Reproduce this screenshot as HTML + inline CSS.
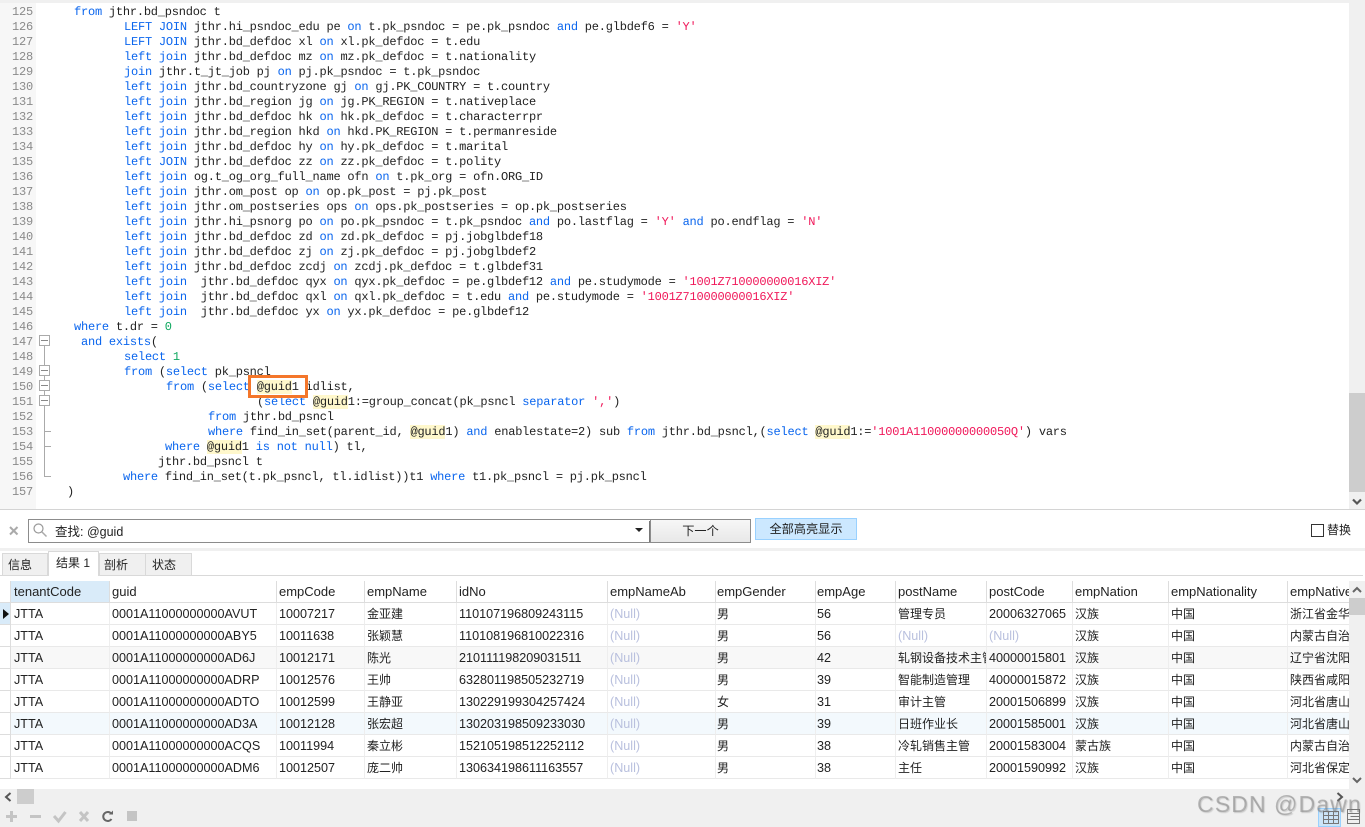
<!DOCTYPE html>
<html><head><meta charset="utf-8"><style>
html,body{margin:0;padding:0;background:#fff;}
#p{position:relative;width:1365px;height:827px;overflow:hidden;background:#fff;font-family:"Liberation Sans","Noto Sans CJK SC",sans-serif;}
.a{position:absolute;}
#code{position:absolute;left:0;top:1px;}
#nums{position:absolute;left:0;top:1px;width:36px;}
#code div{position:absolute;white-space:pre;font:12px/15px "Liberation Mono","Noto Sans CJK SC",monospace;letter-spacing:-.22px;color:#222;height:15px;text-rendering:geometricPrecision;}
#nums div{position:absolute;left:0;width:33px;text-align:right;font:12px/15px "Liberation Mono",monospace;letter-spacing:-.22px;color:#8a8a8a;height:15px;}
i{font-style:normal;color:#0b66ee;}
b{font-weight:normal;color:#f0185a;}
u{text-decoration:none;color:#10a860;}
em{font-style:normal;background:#fff8cc;}
table{border-collapse:separate;border-spacing:0;table-layout:fixed;font-size:12.6px;color:#222;}
td{height:19px;padding:2px 0 0 2px;border-right:1px solid #eee;border-bottom:1px solid #e9e9e9;overflow:hidden;white-space:nowrap;box-sizing:content-box;line-height:19px;}
td:first-child{padding:0;height:21px;border-right:1px solid #ddd;border-bottom:1px solid #ddd;background:#fff;}
td:nth-child(2){padding-left:3px;}
td:nth-child(8),td:nth-child(9){padding-left:1px;}
td.c{font-size:12px;}
tr.h td{height:21px;padding-top:0;line-height:21px;border-bottom:1px solid #ddd;border-right:1px solid #ddd;font-size:13px;}
tr.g td{background:#f8f8f8;}tr.s td{background:#f3f9fd;}
tr.g td:first-child,tr.s td:first-child{background:#fff;}
td.n{color:#b9c0de;}
.tab{position:absolute;top:553px;height:21px;background:#f0f0f0;border:1px solid #d9d9d9;border-bottom:0;box-sizing:content-box;font-size:12px;line-height:22px;color:#222;white-space:nowrap;}
</style></head><body><div id="p">
<div class="a" style="left:0;top:0;width:1365px;height:3px;background:#f0f0f0"></div>
<div class="a" style="left:0;top:3px;width:36px;height:506px;background:#f7f7f7"></div>
<div class="a" style="left:1349px;top:3px;width:16px;height:506px;background:#f0f0f0"></div>
<div class="a" style="left:1349px;top:393px;width:16px;height:99px;background:#cdcdcd"></div>
<svg class="a" style="left:1349px;top:496px" width="16" height="12"><path d="M4 3.500L8 7.500L12 3.500" fill="none" stroke="#555" stroke-width="2.200"/></svg>
<div class="a" style="left:0;top:509px;width:1365px;height:1px;background:#d4d4d4"></div>

<div id="nums">
<div style="top:4px">125</div><div style="top:19px">126</div><div style="top:34px">127</div><div style="top:49px">128</div><div style="top:64px">129</div><div style="top:79px">130</div><div style="top:94px">131</div><div style="top:109px">132</div><div style="top:124px">133</div><div style="top:139px">134</div><div style="top:154px">135</div><div style="top:169px">136</div><div style="top:184px">137</div><div style="top:199px">138</div><div style="top:214px">139</div><div style="top:229px">140</div><div style="top:244px">141</div><div style="top:259px">142</div><div style="top:274px">143</div><div style="top:289px">144</div><div style="top:304px">145</div><div style="top:319px">146</div><div style="top:334px">147</div><div style="top:349px">148</div><div style="top:364px">149</div><div style="top:379px">150</div><div style="top:394px">151</div><div style="top:409px">152</div><div style="top:424px">153</div><div style="top:439px">154</div><div style="top:454px">155</div><div style="top:469px">156</div><div style="top:484px">157</div>
</div>

<svg class="a" style="left:36px;top:330px" width="20" height="160">
<path d="M8.500 16V146.500H15M8.500 101.500H15M8.500 116.500H15" fill="none" stroke="#aaa"/>
<g fill="#fff" stroke="#aaa"><rect x="3.500" y="5.500" width="10" height="10"/><rect x="3.500" y="35.500" width="10" height="10"/><rect x="3.500" y="50.500" width="10" height="10"/><rect x="3.500" y="65.500" width="10" height="10"/></g>
<path d="M5 10.500H12M5 40.500H12M5 55.500H12M5 70.500H12" stroke="#888"/>
</svg>

<div id="code">
<div style="left:74px;top:4px"><i>from</i> jthr.bd_psndoc t</div>
<div style="left:124px;top:19px"><i>LEFT JOIN</i> jthr.hi_psndoc_edu pe <i>on</i> t.pk_psndoc = pe.pk_psndoc <i>and</i> pe.glbdef6 = <b>'Y'</b></div>
<div style="left:124px;top:34px"><i>LEFT JOIN</i> jthr.bd_defdoc xl <i>on</i> xl.pk_defdoc = t.edu</div>
<div style="left:124px;top:49px"><i>left join</i> jthr.bd_defdoc mz <i>on</i> mz.pk_defdoc = t.nationality</div>
<div style="left:124px;top:64px"><i>join</i> jthr.t_jt_job pj <i>on</i> pj.pk_psndoc = t.pk_psndoc</div>
<div style="left:124px;top:79px"><i>left join</i> jthr.bd_countryzone gj <i>on</i> gj.PK_COUNTRY = t.country</div>
<div style="left:124px;top:94px"><i>left join</i> jthr.bd_region jg <i>on</i> jg.PK_REGION = t.nativeplace</div>
<div style="left:124px;top:109px"><i>left join</i> jthr.bd_defdoc hk <i>on</i> hk.pk_defdoc = t.characterrpr</div>
<div style="left:124px;top:124px"><i>left join</i> jthr.bd_region hkd <i>on</i> hkd.PK_REGION = t.permanreside</div>
<div style="left:124px;top:139px"><i>left join</i> jthr.bd_defdoc hy <i>on</i> hy.pk_defdoc = t.marital</div>
<div style="left:124px;top:154px"><i>left JOIN</i> jthr.bd_defdoc zz <i>on</i> zz.pk_defdoc = t.polity</div>
<div style="left:124px;top:169px"><i>left join</i> og.t_og_org_full_name ofn <i>on</i> t.pk_org = ofn.ORG_ID</div>
<div style="left:124px;top:184px"><i>left join</i> jthr.om_post op <i>on</i> op.pk_post = pj.pk_post</div>
<div style="left:124px;top:199px"><i>left join</i> jthr.om_postseries ops <i>on</i> ops.pk_postseries = op.pk_postseries</div>
<div style="left:124px;top:214px"><i>left join</i> jthr.hi_psnorg po <i>on</i> po.pk_psndoc = t.pk_psndoc <i>and</i> po.lastflag = <b>'Y'</b> <i>and</i> po.endflag = <b>'N'</b></div>
<div style="left:124px;top:229px"><i>left join</i> jthr.bd_defdoc zd <i>on</i> zd.pk_defdoc = pj.jobglbdef18</div>
<div style="left:124px;top:244px"><i>left join</i> jthr.bd_defdoc zj <i>on</i> zj.pk_defdoc = pj.jobglbdef2</div>
<div style="left:124px;top:259px"><i>left join</i> jthr.bd_defdoc zcdj <i>on</i> zcdj.pk_defdoc = t.glbdef31</div>
<div style="left:124px;top:274px"><i>left join</i>  jthr.bd_defdoc qyx <i>on</i> qyx.pk_defdoc = pe.glbdef12 <i>and</i> pe.studymode = <b>'1001Z710000000016XIZ'</b></div>
<div style="left:124px;top:289px"><i>left join</i>  jthr.bd_defdoc qxl <i>on</i> qxl.pk_defdoc = t.edu <i>and</i> pe.studymode = <b>'1001Z710000000016XIZ'</b></div>
<div style="left:124px;top:304px"><i>left join</i>  jthr.bd_defdoc yx <i>on</i> yx.pk_defdoc = pe.glbdef12</div>
<div style="left:74px;top:319px"><i>where</i> t.dr = <u>0</u></div>
<div style="left:81px;top:334px"><i>and exists</i>(</div>
<div style="left:124px;top:349px"><i>select</i> <u>1</u></div>
<div style="left:124px;top:364px"><i>from</i> (<i>select</i> pk_psncl</div>
<div style="left:166px;top:379px"><i>from</i> (<i>select</i> <em>@guid</em>1 idlist,</div>
<div style="left:257px;top:394px">(<i>select</i> <em>@guid</em>1:=group_concat(pk_psncl <i>separator</i> <b>','</b>)</div>
<div style="left:208px;top:409px"><i>from</i> jthr.bd_psncl</div>
<div style="left:208px;top:424px"><i>where</i> find_in_set(parent_id, <em>@guid</em>1) <i>and</i> enablestate=2) sub <i>from</i> jthr.bd_psncl,(<i>select</i> <em>@guid</em>1:=<b>'1001A11000000000050Q'</b>) vars</div>
<div style="left:165px;top:439px"><i>where</i> <em>@guid</em>1 <i>is not null</i>) tl,</div>
<div style="left:158px;top:454px">jthr.bd_psncl t</div>
<div style="left:123px;top:469px"><i>where</i> find_in_set(t.pk_psncl, tl.idlist))t1 <i>where</i> t1.pk_psncl = pj.pk_psncl</div>
<div style="left:67px;top:484px">)</div>
</div>
<div class="a" style="left:248px;top:375px;width:60px;height:23px;box-sizing:border-box;border:3px solid #f4762a"></div>

<svg class="a" style="left:8px;top:525px" width="12" height="12"><path d="M2 2L9.500 9.500M9.500 2L2 9.500" stroke="#aaa" stroke-width="2"/></svg>
<div class="a" style="left:28px;top:519px;width:622px;height:24px;box-sizing:border-box;border:1px solid #8c8c8c;border-width:1px 0 1px 1px;background:#fff"></div>
<svg class="a" style="left:32px;top:522px" width="16" height="16"><circle cx="6.500" cy="6.500" r="4.500" fill="none" stroke="#999" stroke-width="1.200"/><path d="M10 10L14.500 14.500" stroke="#aaa" stroke-width="1.500"/></svg>
<div class="a" style="left:55px;top:524px;font-size:12.500px;line-height:17px;color:#222">查找: @guid</div>
<svg class="a" style="left:634px;top:527px" width="10" height="7"><path d="M1 1H9L5 5Z" fill="#222"/></svg>
<div class="a" style="left:649px;top:521px;width:1px;height:21px;background:#777"></div>
<div class="a" style="left:650px;top:519px;width:101px;height:24px;box-sizing:border-box;border:1px solid #8c8c8c;background:linear-gradient(#f7f7f7,#e8e8e8);font-size:12.200px;line-height:23px;text-align:center;color:#222">下一个</div>
<div class="a" style="left:755px;top:518px;width:102px;height:22px;box-sizing:border-box;border:1px solid #99d1ff;background:#cce8ff;font-size:12.200px;line-height:21px;text-align:center;color:#222">全部高亮显示</div>
<div class="a" style="left:1311px;top:524px;width:13px;height:13px;box-sizing:border-box;border:1px solid #333;background:#fff"></div>
<div class="a" style="left:1327px;top:522px;font-size:12px;line-height:17px;color:#222">替换</div>

<div class="a" style="left:0;top:548px;width:1365px;height:3px;background:#f0f0f0"></div>
<div class="a" style="left:0;top:575px;width:1363px;height:1px;background:#d9d9d9"></div>
<div class="tab" style="left:2px;width:39px;padding-left:5px">信息</div>
<div class="tab" style="left:48px;top:551px;width:42px;padding-left:7px;height:24px;background:#fff;line-height:22px;z-index:2;font-size:12px">结果 1</div>
<div class="tab" style="left:99px;width:41px;padding-left:4px">剖析</div>
<div class="tab" style="left:145px;width:39px;padding-left:6px">状态</div>

<div class="a" style="left:0;top:581px;width:1349px;height:208px;overflow:hidden">
<table style="width:1360px">
<colgroup><col style="width:11px"><col style="width:99px"><col style="width:167px"><col style="width:88px"><col style="width:92px"><col style="width:151px"><col style="width:108px"><col style="width:100px"><col style="width:80px"><col style="width:91px"><col style="width:86px"><col style="width:96px"><col style="width:119px"><col style="width:72px"></colgroup>
<tr class="h"><td></td><td style="background:#d9ebf9">tenantCode</td><td>guid</td><td>empCode</td><td>empName</td><td>idNo</td><td>empNameAb</td><td>empGender</td><td>empAge</td><td>postName</td><td>postCode</td><td>empNation</td><td>empNationality</td><td>empNative</td></tr>
<tr><td style="position:relative;background:#d9ebf9"><svg style="position:absolute;left:2px;top:5px" width="8" height="12"><path d="M1 1L7 6L1 11Z" fill="#111"/></svg></td><td>JTTA</td><td>0001A11000000000AVUT</td><td>10007217</td><td class="c">金亚建</td><td>110107196809243115</td><td class="n">(Null)</td><td class="c">男</td><td>56</td><td class="c">管理专员</td><td>20006327065</td><td class="c">汉族</td><td class="c">中国</td><td class="c">浙江省金华市</td></tr>
<tr><td></td><td>JTTA</td><td>0001A11000000000ABY5</td><td>10011638</td><td class="c">张颖慧</td><td>110108196810022316</td><td class="n">(Null)</td><td class="c">男</td><td>56</td><td class="n">(Null)</td><td class="n">(Null)</td><td class="c">汉族</td><td class="c">中国</td><td class="c">内蒙古自治区</td></tr>
<tr class="g"><td></td><td>JTTA</td><td>0001A11000000000AD6J</td><td>10012171</td><td class="c">陈光</td><td>210111198209031511</td><td class="n">(Null)</td><td class="c">男</td><td>42</td><td class="c">轧钢设备技术主管</td><td>40000015801</td><td class="c">汉族</td><td class="c">中国</td><td class="c">辽宁省沈阳市</td></tr>
<tr><td></td><td>JTTA</td><td>0001A11000000000ADRP</td><td>10012576</td><td class="c">王帅</td><td>632801198505232719</td><td class="n">(Null)</td><td class="c">男</td><td>39</td><td class="c">智能制造管理</td><td>40000015872</td><td class="c">汉族</td><td class="c">中国</td><td class="c">陕西省咸阳市</td></tr>
<tr><td></td><td>JTTA</td><td>0001A11000000000ADTO</td><td>10012599</td><td class="c">王静亚</td><td>130229199304257424</td><td class="n">(Null)</td><td class="c">女</td><td>31</td><td class="c">审计主管</td><td>20001506899</td><td class="c">汉族</td><td class="c">中国</td><td class="c">河北省唐山市</td></tr>
<tr class="s"><td></td><td>JTTA</td><td>0001A11000000000AD3A</td><td>10012128</td><td class="c">张宏超</td><td>130203198509233030</td><td class="n">(Null)</td><td class="c">男</td><td>39</td><td class="c">日班作业长</td><td>20001585001</td><td class="c">汉族</td><td class="c">中国</td><td class="c">河北省唐山市</td></tr>
<tr><td></td><td>JTTA</td><td>0001A11000000000ACQS</td><td>10011994</td><td class="c">秦立彬</td><td>152105198512252112</td><td class="n">(Null)</td><td class="c">男</td><td>38</td><td class="c">冷轧销售主管</td><td>20001583004</td><td class="c">蒙古族</td><td class="c">中国</td><td class="c">内蒙古自治区</td></tr>
<tr><td></td><td>JTTA</td><td>0001A11000000000ADM6</td><td>10012507</td><td class="c">庞二帅</td><td>130634198611163557</td><td class="n">(Null)</td><td class="c">男</td><td>38</td><td class="c">主任</td><td>20001590992</td><td class="c">汉族</td><td class="c">中国</td><td class="c">河北省保定市</td></tr>
</table>
</div>

<div class="a" style="left:1349px;top:581px;width:16px;height:208px;background:#f0f0f0"></div>
<div class="a" style="left:1349px;top:598px;width:16px;height:17px;background:#cdcdcd"></div>
<svg class="a" style="left:1349px;top:585px" width="16" height="10"><path d="M4 7L8 3L12 7" fill="none" stroke="#666" stroke-width="2"/></svg>
<svg class="a" style="left:1349px;top:775px" width="16" height="10"><path d="M4 3L8 7L12 3" fill="none" stroke="#666" stroke-width="2"/></svg>

<div class="a" style="left:0;top:789px;width:1365px;height:38px;background:#f0f0f0"></div>
<div class="a" style="left:17px;top:789px;width:17px;height:15px;background:#cdcdcd"></div>
<svg class="a" style="left:3px;top:791px" width="10" height="12"><path d="M7.500 2L3 6L7.500 10" fill="none" stroke="#555" stroke-width="2"/></svg>
<svg class="a" style="left:1335px;top:791px" width="10" height="12"><path d="M2.500 2L7 6L2.500 10" fill="none" stroke="#555" stroke-width="2"/></svg>
<svg class="a" style="left:0;top:806px" width="142" height="20">
<path d="M11.500 5V16M6 10.500H17M30 10.500H41" stroke="#c4c4c4" stroke-width="3" fill="none"/>
<path d="M54 10L58.500 15L65.500 6" stroke="#c4c4c4" stroke-width="3" fill="none"/>
<path d="M80 6L88 15M88 6L80 15" stroke="#c4c4c4" stroke-width="3" fill="none"/>
<path d="M111.500 8A4.500 4.500 0 1 0 111.500 13" stroke="#666" stroke-width="2" fill="none"/><path d="M109 8.500H113V4.500Z" fill="#666"/>
<rect x="127" y="5" width="10" height="10" fill="#c4c4c4"/>
</svg>

<div class="a" style="left:1318px;top:808px;width:23px;height:19px;box-sizing:border-box;background:#cce4f7;border:1px solid #99d1ff"></div>
<svg class="a" style="left:1318px;top:808px" width="47" height="19">
<path d="M5.500 3.500H20.500V15.500H5.500ZM5.500 7.500H20.500M5.500 11.500H20.500M10.500 3.500V15.500M15.500 3.500V15.500" fill="none" stroke="#777"/>
<path d="M29.500 1.500H41.500V15.500H29.500ZM29.500 5.500H41.500M29.500 11.500H41.500M32.500 8.500H41.500" fill="none" stroke="#777"/>
</svg>
<div class="a" style="left:1197px;top:790px;font-size:23px;line-height:28px;letter-spacing:1.100px;color:rgba(125,125,125,.5);text-shadow:1px 1px 1px rgba(90,90,90,.25);white-space:nowrap;z-index:5">CSDN @Dawn</div>
</div></body></html>
